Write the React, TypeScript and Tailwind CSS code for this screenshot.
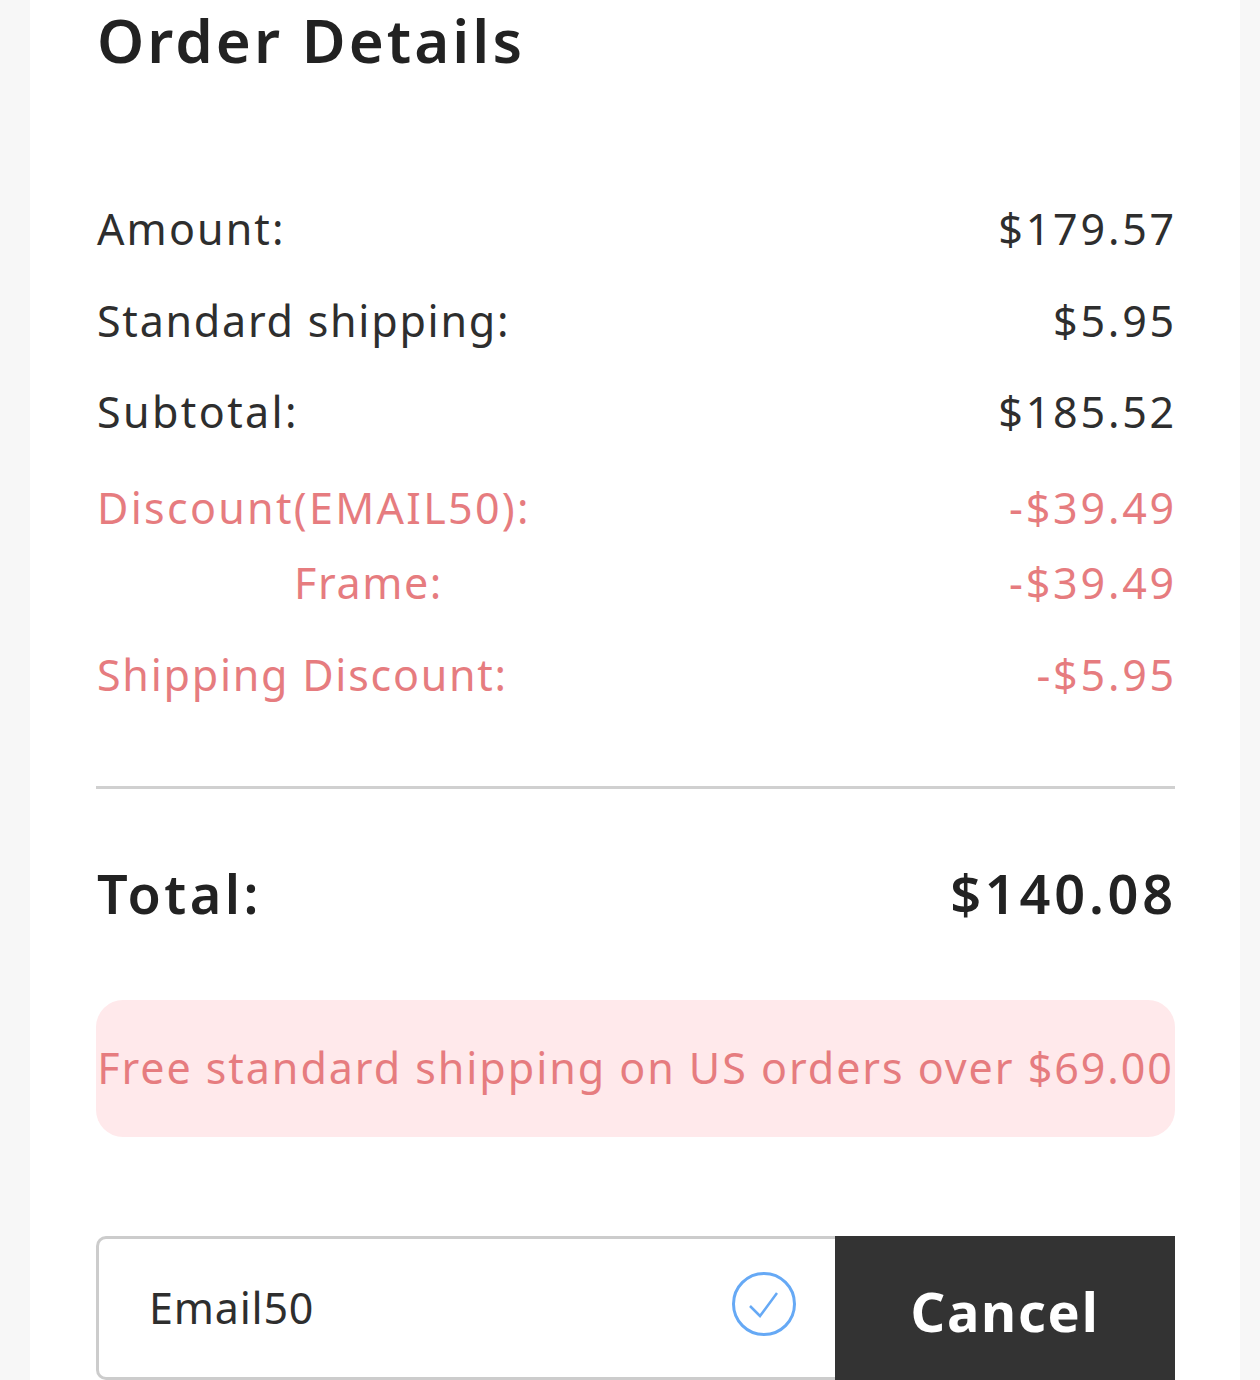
import React from "react";

function Row({ label, value, red, className = "", labelClass = "" }: { label: string; value: string; red?: boolean; className?: string; labelClass?: string }) {
  return (
    <div className={`flex items-center justify-between text-[43px] leading-[60px] ${red ? "text-[#e67c7f]" : "text-[#2e2e2e]"} ${className}`}>
      <span className={labelClass}>{label}</span>
      <span className="-mr-[2px] tracking-[2.8px]">{value}</span>
    </div>
  );
}

export default function App() {
  return (
    <div className="h-[1380px] w-[1260px] overflow-hidden bg-[#f7f7f7] px-[30px] font-['Noto_Sans','Open_Sans',sans-serif]">
      <div className="h-full w-[1210px] bg-white pl-[66px] pr-[65px]">
        <h1 className="h-[84px] pl-[1px] text-[60px] font-semibold leading-[80px] tracking-[3.05px] text-[#222222]">Order Details</h1>
        <div className="pt-[115px]">
          <Row label="Amount:" value="$179.57" labelClass="tracking-[2.1px] pl-[1px]" />
          <Row label="Standard shipping:" value="$5.95" className="mt-[32px]" labelClass="tracking-[1.75px] pl-[1px]" />
          <Row label="Subtotal:" value="$185.52" className="mt-[31px]" labelClass="tracking-[2.4px] pl-[1px]" />
          <Row label="Discount(EMAIL50):" value="-$39.49" red className="mt-[36px]" labelClass="tracking-[2.3px] pl-[1px]" />
          <Row label="Frame:" value="-$39.49" red className="mt-[15px]" labelClass="tracking-[1.6px] pl-[198px]" />
          <Row label="Shipping Discount:" value="-$5.95" red className="mt-[32px]" labelClass="tracking-[1.75px] pl-[1px]" />
        </div>
        <div className="mt-[81px] h-[3px] bg-[#d0d0d0]" />
        <div className="mt-[66px] flex items-center justify-between text-[54px] font-semibold leading-[76px] text-[#222222]">
          <span className="pl-[1px] tracking-[3.5px]">Total:</span>
          <span className="-mr-[2px] tracking-[3.8px]">$140.08</span>
        </div>
        <div className="mt-[69px] flex h-[137px] items-center justify-center whitespace-nowrap rounded-[27px] bg-[#ffe9eb] text-[43px] tracking-[1.95px] text-[#e67c7f]">
          Free standard shipping on US orders over $69.00
        </div>
        <div className="mt-[99px] flex h-[144px]">
          <div className="flex w-[739px] items-center justify-between rounded-l-[10px] border-[3px] border-r-0 border-[#cccccc] pl-[50px] pr-[37px]">
            <span className="text-[43px] tracking-[0.8px] text-[#2e2e2e]">Email50</span>
            <svg width="68" height="68" viewBox="0 0 68 68" fill="none" className="mb-[8px]">
              <circle cx="34" cy="34" r="30.5" stroke="#66a9f5" strokeWidth="3" />
              <path d="M20 36 L30 46 L47 23" stroke="#66a9f5" strokeWidth="2.5" />
            </svg>
          </div>
          <div className="flex w-[340px] items-center justify-center bg-[#333333] pt-[6px] text-[54px] font-bold tracking-[1.8px] text-white">Cancel</div>
        </div>
      </div>
    </div>
  );
}
